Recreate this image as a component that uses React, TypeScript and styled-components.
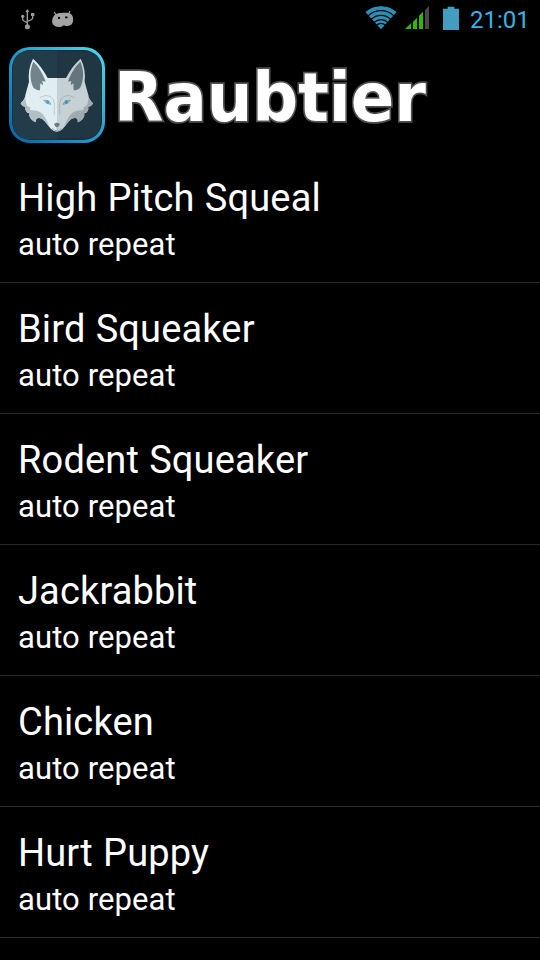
import styled, { createGlobalStyle } from 'styled-components';

const GlobalStyle = createGlobalStyle`
  html,
  body {
    margin: 0;
    padding: 0;
    background: #000;
    overflow: hidden;
  }
`;

const Screen = styled.main`
  width: 540px;
  height: 960px;
  overflow: hidden;
  display: flex;
  flex-direction: column;
  background: #000;
  color: #fff;
  font-family: Roboto, 'Noto Sans', sans-serif;
`;

const StatusBar = styled.div`
  flex: none;
  height: 38px;
  display: flex;
  justify-content: space-between;
`;

const StatusGroup = styled.div`
  display: flex;

  svg {
    display: block;
  }
`;

const Clock = styled.span`
  width: 70px;
  font-size: 24px;
  line-height: 40px;
  color: #33b5e5;
`;

const Header = styled.header`
  flex: none;
  height: 114px;
  box-sizing: border-box;
  padding: 9px 0 0 9px;
  display: flex;
  align-items: flex-start;

  svg {
    flex: none;
    display: block;
  }
`;

const AppName = styled.h1`
  margin: 3px 0 0 9px;
  font-family: 'DejaVu Sans', sans-serif;
  font-size: 68px;
  font-weight: bold;
  line-height: 96px;
  color: #fff;
  -webkit-text-stroke: 3.5px #505050;
  paint-order: stroke fill;
  transform: scaleX(0.943);
  transform-origin: left center;
`;

const SoundList = styled.ul`
  margin: 0;
  padding: 0;
  list-style: none;
`;

const SoundItem = styled.li`
  height: 131px;
  box-sizing: border-box;
  padding: 22px 18px 0;
  border-bottom: 1px solid #292929;
  white-space: nowrap;
`;

const SoundName = styled.div`
  font-size: 38px;
  line-height: 48px;
  letter-spacing: 0.15px;
  word-spacing: 0.6px;
`;

const SoundMode = styled.div`
  font-size: 31px;
  line-height: 45px;
  letter-spacing: 0.1px;
`;

const sounds = [
  'High Pitch Squeal',
  'Bird Squeaker',
  'Rodent Squeaker',
  'Jackrabbit',
  'Chicken',
  'Hurt Puppy',
];

const NotificationIcons = () => (
  <svg width="120" height="38" viewBox="0 0 360 114">
    <g fill="none" stroke="#9b9b9b" strokeWidth="4">
      <path d="M82 34v46M68 50v8q0 5 14 10M98 46v8q0 5-16 10" />
    </g>
    <g fill="#9b9b9b">
      <path d="M82 27l6 9H76z" />
      <circle cx="82" cy="80" r="7.5" />
      <circle cx="68" cy="49" r="5" />
      <path d="M93 39h10v9H93z" />
    </g>
    <path
      d="M164 45C168 38 207 36 213 42C220 48 221 60 218 68C214 77 203 79 196 77C190 76 188 78 184 80C174 83 160 79 157 70C155 61 158 51 164 45Z"
      fill="#a3a3a3"
    />
    <path d="M168 44l-6-8M206 41l4-8" stroke="#a3a3a3" strokeWidth="3.5" />
    <circle cx="177" cy="54" r="3.5" fill="#000" />
    <circle cx="199" cy="52" r="3.5" fill="#000" />
  </svg>
);

const ConnectionIcons = () => (
  <svg width="120" height="38" viewBox="0 0 360 114">
    <clipPath id="wifi">
      <path d="M93 88L46 36Q66 18 93 18T140 36Z" />
    </clipPath>
    <g clipPath="url(#wifi)" fill="none" stroke="#2b8fb7">
      <circle cx="93" cy="88" r="64" strokeWidth="12" />
      <circle cx="93" cy="88" r="49" strokeWidth="10" />
      <circle cx="93" cy="88" r="35.5" strokeWidth="9" />
      <circle cx="93" cy="88" r="23.5" strokeWidth="7" />
      <circle cx="93" cy="88" r="16" fill="#2b8fb7" stroke="none" />
    </g>
    <g fill="#33b800">
      <path d="M165 87l18-17v17z" />
      <path d="M189 87V65l12-12v34z" />
      <path d="M207 87V47l12-12v52z" />
    </g>
    <path d="M225 87V30l12-12v69z" fill="#484848" />
    <path d="M279 90V26h14v-6h20v6h14v64z" fill="#439dc2" />
  </svg>
);

const WolfLogo = () => (
  <svg width="96" height="96" viewBox="27 21 288 288">
    <defs>
      <linearGradient id="frame" x1="0" y1="1" x2="1" y2="0">
        <stop offset="0.08" stopColor="#076eb0" />
        <stop offset="0.5" stopColor="#239ccc" />
        <stop offset="1" stopColor="#50d9ea" />
      </linearGradient>
    </defs>
    <rect x="27" y="21" width="288" height="288" rx="63" fill="url(#frame)" />
    <rect x="36" y="30" width="270" height="270" rx="55" fill="#1b303c" />
    <path d="M171 32H92Q38 32 38 86V244Q38 298 92 298H171Z" fill="#223c49" />
    <path d="M171 36H250Q302 36 302 86V240Q302 294 250 294H171Z" fill="#203743" />

    <path
      d="M171 114H143C131 91 116 70 99 56C88 78 84 101 87 125L76 165Q75 178 62 190Q67 201 77 200Q74 206 77 211Q80 220 88 220Q86 230 93 237Q99 244 108 247Q106 235 115 234Q125 233 134 244L153 267Q161 275 171 275Z"
      fill="#e0edf1"
    />
    <path
      d="M171 114H198C210 91 225 70 242 56C253 78 257 101 254 125L265 165Q266 178 279 190Q274 201 264 200Q267 206 264 211Q261 220 253 220Q255 230 248 237Q242 244 233 247Q235 235 226 234Q216 233 207 244L188 267Q180 275 171 275Z"
      fill="#c5d1d5"
    />
    <path
      d="M100 65C116 80 128 99 137 125L127 123L129 136L121 130L120 151C112 151 107 149 101 144C88 119 89 91 100 65Z"
      fill="#72838c"
    />
    <path
      d="M241 65C225 80 213 99 204 125L214 123L212 136L220 130L221 151C229 151 234 149 240 144C253 119 252 91 241 65Z"
      fill="#65757d"
    />
    <path
      d="M77 165Q73 184 62 190Q67 201 78 199Q73 205 78 211Q82 220 89 219Q86 230 93 237Q99 244 108 247Q106 235 115 234Q128 232 139 249L148 261Q137 228 121 217Q107 209 91 211L90 202Q79 197 78 188Q74 180 77 165Z"
      fill="#b2bfc4"
    />
    <path
      d="M265 165Q268 184 279 190Q274 201 263 199Q268 205 263 211Q259 220 252 219Q255 230 248 237Q242 244 233 247Q235 235 226 234Q213 232 202 249L193 261Q204 228 220 217Q234 209 250 211L251 202Q262 197 263 188Q267 180 265 165Z"
      fill="#9eabb2"
    />
    <g fill="none" strokeWidth="3">
      <path d="M119 173Q136 162 150 169Q161 174 163 190V224" stroke="#bdcace" />
      <path d="M223 173Q206 162 192 169Q181 174 179 190V224" stroke="#a9b6bb" />
      <path d="M131 181Q147 179 153 193Q138 192 131 181Z" fill="#b6cbd3" stroke="#95a9b1" />
      <path d="M211 181Q195 179 189 193Q204 192 211 181Z" fill="#adbec4" stroke="#8798a0" />
      <path d="M156 265Q171 280 186 265" stroke="#98a5ab" />
    </g>
    <circle cx="143" cy="186" r="5" fill="#2cafd0" />
    <circle cx="199" cy="186" r="5" fill="#259cbd" />
    <path d="M163 251Q171 246 179 251Q180 258 171 262Q162 258 163 251Z" fill="#6b7c84" />
    <path d="M171 260v9" stroke="#8c9aa1" strokeWidth="2" />
  </svg>
);

const App = () => {
  return (
    <>
      <GlobalStyle />
      <Screen>
        <StatusBar>
          <NotificationIcons />
          <StatusGroup>
            <ConnectionIcons />
            <Clock>21:01</Clock>
          </StatusGroup>
        </StatusBar>
        <Header>
          <WolfLogo />
          <AppName>Raubtier</AppName>
        </Header>
        <SoundList>
          {sounds.map((name) => (
            <SoundItem key={name}>
              <SoundName>{name}</SoundName>
              <SoundMode>auto repeat</SoundMode>
            </SoundItem>
          ))}
        </SoundList>
      </Screen>
    </>
  );
};

export default App;
